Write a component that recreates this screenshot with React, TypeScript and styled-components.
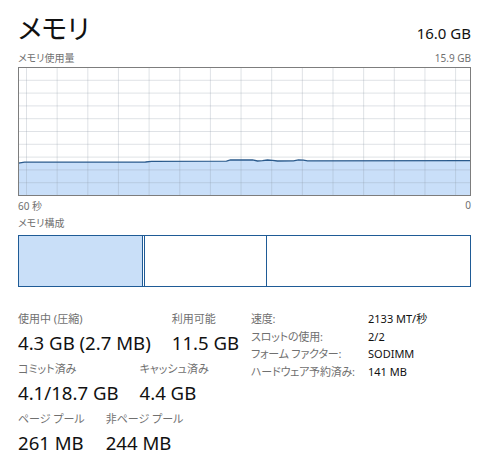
import React from "react";
import styled, { createGlobalStyle } from "styled-components";

const Global = createGlobalStyle`
  html, body { margin: 0; padding: 0; background: #ffffff; }
  body {
    font-family: "Noto Sans", "Noto Sans CJK JP", sans-serif;
    font-feature-settings: "palt";
    color: #111;
  }
`;

const Page = styled.div`
  width: 492px;
  height: 474px;
  box-sizing: border-box;
  padding: 10px 21px 0 18px;
  display: flex;
  flex-direction: column;
  overflow: hidden;
`;

const Header = styled.div`
  display: flex;
  justify-content: space-between;
  align-items: baseline;
  height: 38px;
`;

const Title = styled.h1`
  margin: 0;
  font-size: 27px;
  font-weight: 400;
  line-height: 38px;
  color: #111;
`;

const Total = styled.span`
  font-size: 15px;
  line-height: 20px;
  color: #111;
`;

const SubRow = styled.div<{ $h: number }>`
  display: flex;
  justify-content: space-between;
  align-items: center;
  height: ${(p) => p.$h}px;
  font-size: 10px;
  color: #707070;
`;

const GraphBox = styled.svg`
  display: block;
  width: 453px;
  height: 129px;
`;

const CompBar = styled.div`
  display: flex;
  height: 52px;
  box-sizing: border-box;
  border: 1px solid #1f5b96;
  margin-top: 4px;
`;

const Segment = styled.div<{ $w?: number; $fill?: boolean }>`
  ${(p) => (p.$w !== undefined ? `width: ${p.$w}px;` : "flex: 1;")}
  background: ${(p) => (p.$fill ? "#c9dff8" : "#ffffff")};
  border-right: 1px solid #1f5b96;
  &:last-child { border-right: none; }
`;

const Stats = styled.div`
  display: flex;
  margin-top: 23px;
`;

const LeftCol = styled.div`
  width: 233px;
  display: flex;
  flex-direction: column;
  gap: 2px;
`;

const StatRow = styled.div`
  display: flex;
  gap: 21px;
`;

const Stat = styled.div`
  display: flex;
  flex-direction: column;
`;

const StatLabel = styled.div`
  height: 18px;
  line-height: 18px;
  font-size: 11px;
  color: #707070;
  white-space: nowrap;
`;

const StatValue = styled.div`
  height: 30px;
  line-height: 30px;
  font-size: 18.6px;
  color: #111;
  white-space: nowrap;
`;

const Details = styled.div`
  display: grid;
  grid-template-columns: 117px auto;
  grid-auto-rows: 17.5px;
  align-content: start;
  font-size: 11px;
  line-height: 17.5px;
  white-space: nowrap;
`;

const DLabel = styled.div`
  color: #707070;
  letter-spacing: -0.2px;
`;

const DValue = styled.div`
  color: #111;
`;

const W = 453;
const H = 129;

const linePts: [number, number][] = [
  [18, 162.6], [24, 161.7], [145, 161.5], [151, 160.9], [226, 160.7], [230, 159.5],
  [252, 159.4], [257, 160.5], [262, 160.2], [267, 159.5], [272, 159.8], [277, 160.5],
  [293, 160.3], [298, 159.4], [303, 159.6], [307, 160.3], [470, 160.2],
];

function Graph() {
  const pts = linePts.map(([x, y]) => [x - 18 + 0.5, y - 67 + 0.5]);
  const line = pts.map(([x, y], i) => `${i ? "L" : "M"}${x.toFixed(1)} ${y.toFixed(1)}`).join(" ");
  const area = `${line} L${W - 0.5} ${H - 0.5} L0.5 ${H - 0.5} Z`;
  const vlines: number[] = [];
  for (let k = 0; k < 15; k++) vlines.push(26 - 18 + 30.65 * k);
  const hlines: number[] = [];
  for (let k = 1; k < 10; k++) hlines.push(12.8 * k);
  return (
    <GraphBox viewBox={`0 0 ${W} ${H}`}>
      <rect x={0} y={0} width={W} height={H} fill="#ffffff" />
      <path d={area} fill="#c9dff9" />
      {vlines.map((x) => (
        <line key={`v${x}`} x1={x + 0.5} x2={x + 0.5} y1={0} y2={H} stroke="rgba(140,150,165,0.28)" strokeWidth={1} />
      ))}
      {hlines.map((y) => (
        <line key={`h${y}`} x1={0} x2={W} y1={y + 0.5} y2={y + 0.5} stroke="rgba(140,150,165,0.28)" strokeWidth={1} />
      ))}
      <path d={line} fill="none" stroke="#2a5a8c" strokeWidth={1.3} />
      <rect x={0.5} y={0.5} width={W - 1} height={H - 1} fill="none" stroke="#7d7d7d" strokeWidth={1} />
    </GraphBox>
  );
}

export default function App() {
  return (
    <>
      <Global />
      <Page>
        <Header>
          <Title>メモリ</Title>
          <Total>16.0 GB</Total>
        </Header>
        <SubRow $h={19}>
          <span>メモリ使用量</span>
          <span>15.9 GB</span>
        </SubRow>
        <Graph />
        <SubRow $h={18}>
          <span>60 秒</span>
          <span>0</span>
        </SubRow>
        <SubRow $h={17}>
          <span>メモリ構成</span>
        </SubRow>
        <CompBar>
          <Segment $w={123} $fill />
          <Segment $w={1} />
          <Segment $w={121} />
          <Segment />
        </CompBar>
        <Stats>
          <LeftCol>
            <StatRow>
              <Stat>
                <StatLabel>使用中 (圧縮)</StatLabel>
                <StatValue>4.3 GB (2.7 MB)</StatValue>
              </Stat>
              <Stat>
                <StatLabel>利用可能</StatLabel>
                <StatValue>11.5 GB</StatValue>
              </Stat>
            </StatRow>
            <StatRow>
              <Stat>
                <StatLabel>コミット済み</StatLabel>
                <StatValue>4.1/18.7 GB</StatValue>
              </Stat>
              <Stat>
                <StatLabel>キャッシュ済み</StatLabel>
                <StatValue>4.4 GB</StatValue>
              </Stat>
            </StatRow>
            <StatRow>
              <Stat>
                <StatLabel>ページ プール</StatLabel>
                <StatValue>261 MB</StatValue>
              </Stat>
              <Stat>
                <StatLabel>非ページ プール</StatLabel>
                <StatValue>244 MB</StatValue>
              </Stat>
            </StatRow>
          </LeftCol>
          <Details>
            <DLabel>速度:</DLabel>
            <DValue>2133 MT/秒</DValue>
            <DLabel>スロットの使用:</DLabel>
            <DValue>2/2</DValue>
            <DLabel>フォーム ファクター:</DLabel>
            <DValue>SODIMM</DValue>
            <DLabel>ハードウェア予約済み:</DLabel>
            <DValue>141 MB</DValue>
          </Details>
        </Stats>
      </Page>
    </>
  );
}
